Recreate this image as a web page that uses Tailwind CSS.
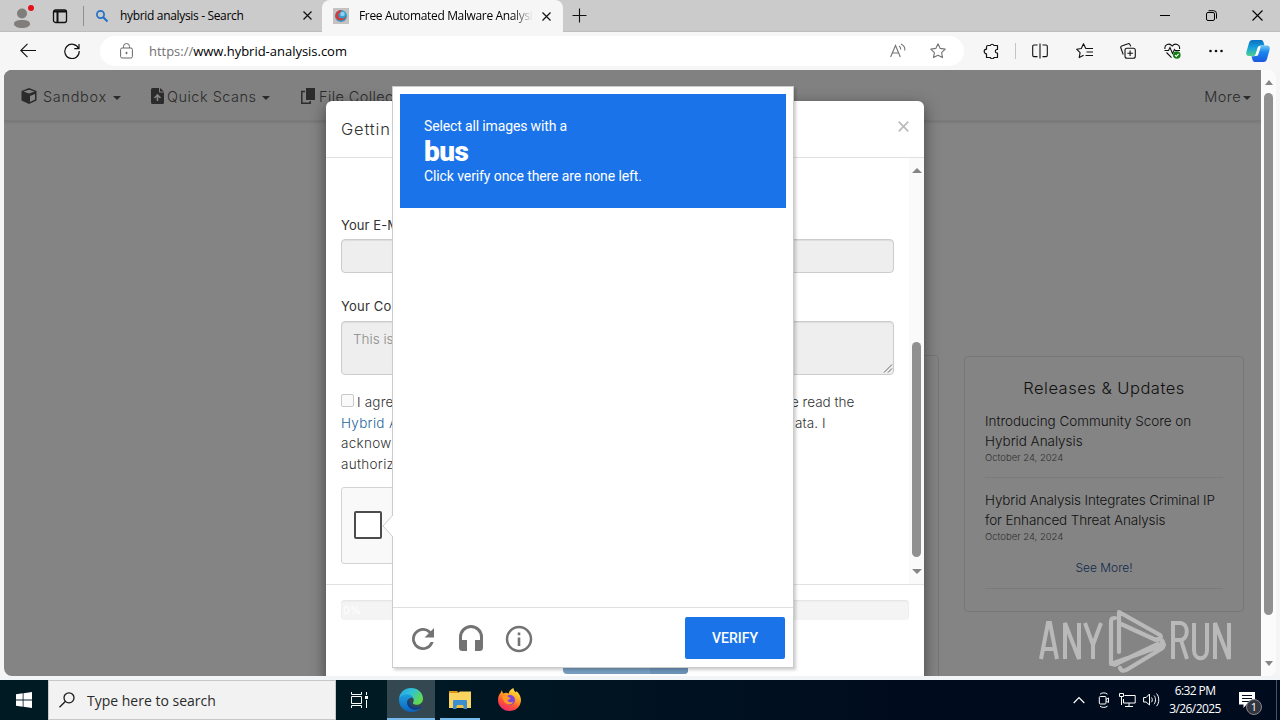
<!DOCTYPE html>
<html lang="en">
<head>
    <meta charset="UTF-8">
    <meta name="viewport" content="width=device-width, initial-scale=1.0">
    <title>Free Automated Malware Analysis Service</title>
    <script src="https://cdn.jsdelivr.net/npm/@tailwindcss/browser@4"></script>
</head>
<body class="bg-[#f5f5f5] overflow-hidden">
<div class="relative w-[1280px] h-[720px] flex flex-col overflow-hidden font-['Open_Sans',sans-serif] text-black">

    <!-- Tab strip -->
    <div class="h-8 shrink-0 flex bg-[#cbcbcb] border-b border-[#bdbdbd]">
        <div class="w-[322px] flex items-center rounded-br-lg">
            <svg class="ml-3 w-[24px] h-[28px] shrink-0" viewBox="0 0 24 28">
                <circle cx="10" cy="11.500" r="5" fill="#807d7a"/>
                <path d="M2 22c0-3 3-4 8-4s8 1 8 4c0 2.500-4 4-8 4s-8-1.500-8-4z" fill="#807d7a"/>
                <circle cx="19" cy="6" r="3" fill="#e3101a"/>
            </svg>
            <svg class="ml-[16px] w-4 h-4 shrink-0" viewBox="0 0 16 16" fill="none" stroke="#111" stroke-width="1.300">
                <rect x="1.500" y="2" width="13" height="12.500" rx="2"/>
                <path d="M1.500 3.500h13M5.500 4v10.500" stroke-width="2"/>
            </svg>
            <div class="ml-[15px] w-px h-5 bg-[#8f8f8f]"></div>
            <svg class="ml-[10px] w-4 h-4 shrink-0" viewBox="0 0 16 16" fill="none" stroke="#2271c4" stroke-width="1.700">
                <circle cx="6.500" cy="6.500" r="3.600"/><path d="M9.200 9.200l4.300 4.300" stroke-width="2"/>
            </svg>
            <span class="ml-[10px] w-[183px] text-[12px] tracking-[-0.33px] whitespace-nowrap">hybrid analysis - Search</span>
            <svg class="w-[9px] h-[9px]" viewBox="0 0 9 9" stroke="#111" stroke-width="1.200"><path d="M.5.5l8 8M8.500.5l-8 8"/></svg>
        </div>
        <div class="w-[241px] h-8 flex items-center bg-[#f6f6f6] rounded-t-lg z-10">
            <svg class="ml-[11px] w-4 h-4 shrink-0" viewBox="0 0 16 16">
                <rect width="16" height="16" fill="#c5c2c0"/>
                <circle cx="8" cy="8" r="6" fill="#2f9fd0"/>
                <path d="M2.300 9A6 6 0 0 1 8.500 2L7.500 4.500 5 6.500 6.500 10l4 .5 3-2.500A6 6 0 0 1 2.300 9z" fill="#d63a38"/>
                <circle cx="9.500" cy="6" r="2.300" fill="#8bd0ec"/>
            </svg>
            <span class="ml-[10px] w-[174px] text-[12px] tracking-[-0.35px] whitespace-nowrap bg-linear-to-r from-black from-88% to-transparent bg-clip-text text-transparent">Free Automated Malware Analysi</span>
            <svg class="ml-[9px] w-[9px] h-[9px]" viewBox="0 0 9 9" stroke="#111" stroke-width="1.200"><path d="M.5.5l8 8M8.500.5l-8 8"/></svg>
        </div>
        <svg class="ml-[9px] mt-[8px] w-[15px] h-[15px]" viewBox="0 0 15 15" stroke="#111" stroke-width="1.100"><path d="M7.500.5v14M.5 7.500h14"/></svg>
        <div class="ml-auto mr-[17px] flex items-center gap-[35px]">
            <svg class="w-[11px] h-[11px]" viewBox="0 0 11 11" stroke="#000"><path d="M0 5.500h10"/></svg>
            <svg class="w-[11px] h-[11px]" viewBox="0 0 11 11" fill="none" stroke="#000"><rect x=".5" y="2.500" width="8" height="8" rx="1.500"/><path d="M2.500.7h5a3 3 0 0 1 3 3v5"/></svg>
            <svg class="w-[11px] h-[11px]" viewBox="0 0 11 11" stroke="#000" stroke-width="1.100"><path d="M.5.5l10 10M10.500.5l-10 10"/></svg>
        </div>
    </div>

    <!-- Toolbar -->
    <div class="h-[38px] shrink-0 flex items-center bg-[#f6f6f6]">
        <svg class="ml-5 w-4 h-4" viewBox="0 0 16 16" fill="none" stroke="#111" stroke-width="1.100"><path d="M16 7.500H.8M7.500.8L.8 7.500l6.700 6.700"/></svg>
        <svg class="ml-7 w-4 h-4" viewBox="0 0 16 16" fill="none" stroke="#111" stroke-width="1.200"><path d="M14.600 5.500A7.200 7.200 0 1 0 15.200 8M15 1v4.600h-4.700"/></svg>
        <div class="ml-5 w-[864px] h-[30px] bg-white rounded-full flex items-center">
            <svg class="ml-5 w-[13px] h-4" viewBox="0 0 13 16" fill="none" stroke="#666"><rect x=".6" y="5" width="11.800" height="10" rx="1.500"/><path d="M3.500 5V3.500a3 3 0 0 1 6 0V5"/><circle cx="6.500" cy="10" r=".7" fill="#555"/></svg>
            <span class="ml-4 pt-px text-[13px] tracking-[-0.02px] whitespace-nowrap"><span class="text-[#717171]">https://</span>www.hybrid-analysis.com</span>
            <svg class="ml-auto w-4 h-4" viewBox="0 0 16 16" fill="none" stroke="#747474" stroke-width="1.100"><path d="M.6 14L5.500 2.500l4.800 11.500M2.200 10h6.600M9 3c1.300.8 1.800 2 1.600 3.500M11 1c3 1.500 4.200 4 3.700 6.500"/></svg>
            <svg class="ml-6 mr-[18px] w-4 h-4" viewBox="0 0 16 16" fill="none" stroke="#757575" stroke-width="1.100" stroke-linejoin="round"><path d="M8 .8l2.200 4.600 5 .7-3.600 3.500.9 5L8 12.200l-4.500 2.400.9-5L.8 6.100l5-.7z"/></svg>
        </div>
        <svg class="ml-[19px] w-4 h-4" viewBox="0 0 16 16" fill="none" stroke="#111" stroke-width="1.200" stroke-linejoin="round"><path d="M5 2.500h2.300a2 2 0 0 1 3.700 0h3.500v4h-.8a1.800 1.800 0 0 0 0 3.500h.8v4.500h-3.500a2 2 0 0 1-3.700 0H3.500v-3.700a2.300 2.300 0 0 1 0-4.600V4a1.500 1.500 0 0 1 1.500-1.500z"/></svg>
        <div class="ml-4 w-px h-4 bg-[#c4c4c4]"></div>
        <svg class="ml-4 w-4 h-4" viewBox="0 0 16 16" fill="none" stroke="#111" stroke-width="1.100"><path d="M5.500 2H2a1.300 1.300 0 0 0-1.300 1.300v9A1.300 1.300 0 0 0 2 13.600h3.500M10.500 2H14a1.300 1.300 0 0 1 1.300 1.300v9a1.300 1.300 0 0 1-1.300 1.300h-3.500M8 .5v15"/></svg>
        <svg class="ml-7 w-[17px] h-4" viewBox="0 0 17 16" fill="none" stroke="#111" stroke-width="1.100" stroke-linejoin="round"><path d="M9.800 5.500L7.500.8 5.300 5.500.6 6.200l3.500 3.400-.9 5 4.400-2.400M9.500 5.500H17M10.500 9H17M9.500 12.500H17"/></svg>
        <svg class="ml-[27px] w-4 h-4" viewBox="0 0 16 16" fill="none" stroke="#111" stroke-width="1.100"><rect x="5" y="5.200" width="10.300" height="10" rx="2"/><path d="M10.100 7.500v5.500M7.400 10.200h5.500M3.200 11.500L.8 4.800A1.500 1.500 0 0 1 1.700 3L8 .8a1.500 1.500 0 0 1 2 .8l.7 1.800"/></svg>
        <svg class="ml-7 w-[17px] h-4" viewBox="0 0 17 16" fill="none" stroke="#111" stroke-width="1.100"><path d="M1 6C0 1.500 5.500-.5 8.200 3 11 -.5 16.500 1.500 15.500 6M2.500 9.500l5 5.200M.5 7.500h4l1.500-3 2.500 6 2-4 .8 1H16"/><circle cx="12.800" cy="12" r="3.800" fill="#167d16" stroke="none"/><path d="M11 12.200l1.300 1.200 2.300-2.600" stroke="#fff"/></svg>
        <svg class="ml-[27px] w-4 h-4" viewBox="0 0 16 16" fill="#111"><circle cx="2.500" cy="8" r="1.300"/><circle cx="8" cy="8" r="1.300"/><circle cx="13.500" cy="8" r="1.300"/></svg>
        <svg class="ml-[22px] w-6 h-6" viewBox="0 0 24 24">
            <defs>
                <linearGradient id="cp1" x1="0" y1="0" x2="0" y2="1"><stop offset="0" stop-color="#0a6fc4"/><stop offset=".5" stop-color="#17a2dc"/><stop offset="1" stop-color="#4ed08c"/></linearGradient>
                <linearGradient id="cp2" x1="0" y1="0" x2="0" y2="1"><stop offset="0" stop-color="#6fc5f5"/><stop offset=".4" stop-color="#1b87ee"/><stop offset="1" stop-color="#1b58df"/></linearGradient>
            </defs>
            <path d="M6.500 1H15c2 0 2.500 2 3 4l.5 1.500H15c-2 0-2.700 1-3.300 3L10 15c-.5 1.500-1 2-3 2H3c-2.500 0-3.200-2-2.500-4.500L3 4c.6-2 1.500-3 3.500-3z" fill="url(#cp1)"/>
            <path d="M17.500 23H9c-2 0-2.500-2-3-4l-.5-1.800H8c2 0 3-1 3.600-3L13.500 9c.5-1.800 1.200-2.500 3-2.500h4.500c2.500 0 3.200 2 2.500 4.500L21 20c-.6 2-1.500 3-3.500 3z" fill="url(#cp2)"/>
            <path d="M12 7.500h2.800l-2.500 8c-.3.900-.8 1.300-1.500 1.300H8.500c.7-.6 1.100-1.300 1.400-2.300z" fill="#fff"/>
        </svg>
    </div>

    <!-- Web page -->
    <div class="h-[606px] shrink-0 ml-1 mr-1 flex rounded-lg overflow-hidden bg-[#fbfbfb]">
        <div class="relative w-[1257px] bg-[#848484] overflow-hidden font-['Inter',sans-serif]">
            <div class="h-[51px] bg-[#818181] border-b border-[#7b7b7b] shadow-sm flex items-center text-[14.500px] font-light text-[#2b2b2b] pt-[4px]">
                <svg class="ml-[17px] mt-[-2px] w-4 h-4 shrink-0" viewBox="0 0 16 16"><path d="M8 0l7.500 3v9.500L8 16 .5 12.500V3z" fill="#2b2b2b"/><path d="M2.500 3.600L8 1.800l5.500 1.800L8 5.600zM9 8l5-2v5.500l-5 2.500z" fill="#848484"/></svg>
                <span class="ml-[6px] w-[64px] tracking-[0.68px] whitespace-nowrap">Sandbox</span>
                <div class="ml-[6px] mt-0.5 border-x-4 border-t-4 border-x-transparent border-t-[#2b2b2b]"></div>
                <svg class="ml-[30px] mt-[-2px] w-[13px] h-4 shrink-0" viewBox="0 0 13 16"><path d="M1.500 0H8v4.500h5v10a1.500 1.500 0 0 1-1.500 1.500h-10A1.500 1.500 0 0 1 0 14.500v-13A1.500 1.500 0 0 1 1.500 0zM9 0l4 3.600H9z" fill="#2b2b2b"/><path d="M6.500 13V7.500M3.500 10l3-3 3 3" stroke="#848484" stroke-width="1.600" fill="none"/></svg>
                <span class="ml-[3px] w-[91px] tracking-[0.48px] whitespace-nowrap">Quick Scans</span>
                <div class="ml-[4px] mt-0.5 border-x-4 border-t-4 border-x-transparent border-t-[#2b2b2b]"></div>
                <svg class="ml-[31px] mt-[-2px] w-[14px] h-4 shrink-0" viewBox="0 0 14 16"><path d="M5 0h9v12H5z" fill="#2b2b2b"/><path d="M4 3.500H.8v11.700h8.400V13" stroke="#2b2b2b" stroke-width="1.500" fill="none"/></svg>
                <span class="ml-[4px] w-[74px] whitespace-nowrap tracking-[0.4px]">File Collec</span>
                <span class="ml-auto tracking-[0.4px]">More</span>
                <div class="ml-[2px] mr-[10px] mt-0.5 border-x-4 border-t-4 border-x-transparent border-t-[#2b2b2b]"></div>
            </div>

            <div class="flex justify-end pt-[234px]">
                <div class="w-[300px] h-[340px] border border-[#777] rounded-sm"></div>
                <div class="ml-[25px] mr-[17px] mt-px w-[280px] h-[256px] border border-[#767676] rounded-sm px-5 text-[#111]">
                    <h2 class="mt-[19px] text-center text-[16.500px] leading-[24px] font-light tracking-[0.5px]">Releases &amp; Updates</h2>
                    <p class="mt-[12px] text-[13.500px] leading-[19.500px] font-light whitespace-nowrap tracking-[-0.03px]">Introducing Community Score on<br>Hybrid Analysis</p>
                    <p class="mt-px text-[9.500px] leading-[12px] font-light text-[#303030]">October 24, 2024</p>
                    <div class="mt-[13px] border-t border-[#7a7a7a]"></div>
                    <p class="mt-[13px] text-[13.500px] leading-[19.500px] font-light whitespace-nowrap tracking-[-0.14px]">Hybrid Analysis Integrates Criminal IP<br>for Enhanced Threat Analysis</p>
                    <p class="mt-px text-[9.500px] leading-[12px] font-light text-[#303030]">October 24, 2024</p>
                    <p class="mt-[17px] text-center text-[12px] leading-[16px] font-light text-[#102a4c]">See More!</p>
                    <div class="mt-[12px] border-t border-[#7a7a7a]"></div>
                </div>
            </div>

            <!-- Modal -->
            <div class="absolute left-[322px] top-[31px] w-[598px] h-[580px] bg-white rounded-md shadow-[0_5px_15px_rgba(0,0,0,0.5)] text-[#333] text-[14px]">
                <div class="h-[57px] border-b border-[#e0e0e0] flex items-center justify-between px-[15px]">
                    <span class="w-[52px] whitespace-nowrap text-[16.500px] font-light tracking-[0.8px] pt-px">Gettin</span>
                    <svg class="w-[11px] h-[11px] mt-[-5px]" viewBox="0 0 11 11" stroke="#bdbdbd" stroke-width="1.800"><path d="M.7.7l9.600 9.600M10.300.7L.7 10.300"/></svg>
                </div>
                <div class="h-[427px] border-b border-[#e2e2e2] flex">
                    <div class="w-[568px] pl-[15px]">
                        <div class="mt-[57px] h-[20px] leading-[20px] w-[52px] whitespace-nowrap text-[13px] tracking-[0.1px]">Your E-M</div>
                        <div class="mt-1 w-[553px] h-[34px] rounded-sm bg-[#eee] border border-[#ccc] shadow-[inset_0_1px_1px_rgba(0,0,0,0.075)]"></div>
                        <div class="mt-[23px] h-[20px] leading-[20px] w-[52px] whitespace-nowrap text-[13px] tracking-[0.2px]">Your Co</div>
                        <div class="mt-[5px] w-[553px] h-[54px] rounded-sm bg-[#eee] border border-[#ccc] shadow-[inset_0_1px_1px_rgba(0,0,0,0.075)] flex justify-between items-end">
                            <span class="self-start ml-[11px] mt-[7px] w-[40px] whitespace-nowrap font-light text-[13.500px] text-[#8c8c8c]">This is</span>
                            <svg class="w-[10px] h-[9px] mb-px" viewBox="0 0 10 9" stroke="#666"><path d="M1 8.500l8-8M5 8.500l4-4"/></svg>
                        </div>
                        <div class="mt-[17px] w-[553px] text-[13.500px] leading-[20.600px] font-light">
                            <div class="flex whitespace-nowrap">
                                <span class="w-[13px] h-[13px] mt-[2px] rounded-xs border border-[#c9c9c9] bg-[#fafafa]"></span>
                                <span class="ml-[3px] w-[36px] tracking-[0.2px]">I agre</span>
                                <span class="ml-[398px]">e read the</span>
                            </div>
                            <div class="flex whitespace-nowrap">
                                <span class="w-[52px] text-[#23659c] tracking-[0.3px]">Hybrid A</span>
                                <span class="ml-[402px] tracking-[0.1px]">ata. I</span>
                            </div>
                            <div class="w-[51px] tracking-[0.3px]">acknow</div>
                            <div class="w-[52px] tracking-[0.3px]">authoriz</div>
                        </div>
                        <div class="mt-[13px] w-[304px] h-[77px] rounded-[3px] bg-[#f9f9f9] border border-[#d3d3d3] pl-3 flex items-center">
                            <div class="w-7 h-7 mt-[-2px] rounded-xs border-2 border-[#4c4c4c] bg-white"></div>
                        </div>
                    </div>
                    <!-- modal scrollbar -->
                    <div class="ml-auto w-[15px] bg-[#fafafa] flex flex-col items-center pt-[10px]">
                        <div class="border-x-[5px] border-b-[5px] border-x-transparent border-b-[#858585]"></div>
                        <div class="mt-[169px] w-[9px] h-[215px] rounded-full bg-[#909090]"></div>
                        <div class="mt-[12px] border-x-[5px] border-t-[5px] border-x-transparent border-t-[#858585]"></div>
                    </div>
                </div>
                <div class="px-[15px] pt-[15px]">
                    <div class="h-5 rounded-sm bg-[#f4f4f4] shadow-[inset_0_1px_2px_rgba(0,0,0,0.08)] text-white text-[11px] leading-[20px] pl-0.5">0%</div>
                    <div class="mt-[19px] mx-auto w-[125px] h-[35px] rounded-sm bg-[#769dbf] flex justify-end overflow-hidden">
                        <div class="w-[38px] bg-[#6b93b8]"></div>
                    </div>
                </div>
            </div>
        </div>
        <!-- page scrollbar -->
        <div class="w-[15px] flex flex-col items-center pt-[10px]">
            <div class="border-x-[4.500px] border-b-[5px] border-x-transparent border-b-[#858585]"></div>
            <div class="mt-[8px] w-[9px] h-[522px] rounded-full bg-[#909090]"></div>
            <div class="mt-[46px] border-x-[4.500px] border-t-[5px] border-x-transparent border-t-[#858585]"></div>
        </div>
    </div>
    <div class="h-1 shrink-0 bg-[#f2f5f8]"></div>

    <!-- Taskbar -->
    <div class="h-10 shrink-0 flex bg-linear-to-r from-[#001a24] from-30% to-[#000c1e] to-70% text-white">
        <div class="w-12 flex items-center justify-center">
            <svg class="w-4 h-4" viewBox="0 0 16 16" fill="#fff"><path d="M0 2.300L6.700 1.300v6.300H0zM7.500 1.200L16 0v7.600H7.500zM0 8.400h6.700v6.300L0 13.700zM7.500 8.400H16V16l-8.500-1.200z"/></svg>
        </div>
        <div class="w-[288px] bg-[#f2f2f2] border border-[#c8c8c8] flex items-center text-[#2b2b2b]">
            <svg class="ml-[10px] w-4 h-4" viewBox="0 0 16 16" fill="none" stroke="#1a1a1a" stroke-width="1.300"><circle cx="10" cy="5.800" r="5"/><path d="M6.300 9.500L.5 15.300"/></svg>
            <span class="ml-[12px] text-[14px]">Type here to search</span>
        </div>
        <div class="w-[51px] flex items-center justify-center">
            <svg class="w-[17px] h-4 mr-[4px]" viewBox="0 0 17 16" fill="none" stroke="#fff"><path d="M.5 0v2.500h10V0M.5 16v-2.500h10V16M.5 4.500h10v7H.5zM15.500 0v3M15.500 8v8"/><path d="M14 4h3v3h-3z" fill="#fff" stroke="none"/></svg>
        </div>
        <div class="w-12 flex items-center justify-center bg-[#334850] border-b-2 border-[#76b9ed]">
            <svg class="w-6 h-6 mt-px" viewBox="0 0 24 24">
                <defs>
                    <linearGradient id="ed1" x1="0" y1="0" x2="1" y2=".5"><stop offset="0" stop-color="#2a9fe2"/><stop offset=".5" stop-color="#2fc3d9"/><stop offset="1" stop-color="#62d84f"/></linearGradient>
                    <linearGradient id="ed2" x1="0" y1="0" x2="0" y2="1"><stop offset="0" stop-color="#1ea0e0"/><stop offset="1" stop-color="#0d63bd"/></linearGradient>
                </defs>
                <path d="M0 11C.5 4.500 5.500 0 12 0c7 0 12 5 12 10.500 0 4-3 6.300-6.500 6.300-3 0-4-1.300-3.500-2 1.200-1.500 1.200-5.300-2.500-7C7.500 6 2 7.500 0 11z" fill="url(#ed1)"/>
                <path d="M0 11C1.500 7.500 5 6 9 6.300c2.500.2 4.800 1.700 5.500 4-2-1-5-.5-6 2.200-1.300 4 2 8.500 6.500 9.200 3 .3 5.500-.7 7.300-2.200C20 22.500 16 24 12 24 5 24-.5 18 0 11z" fill="url(#ed2)"/>
                <path d="M8.500 12.500c-1.500 5 2 8.500 6.500 9.200 3 .3 5.500-.7 7.300-2.200.4-.6.200-1.400-.8-1-5.500 2-11.500-.5-11-6z" fill="#103f88"/>
            </svg>
        </div>
        <div class="w-[50px] flex flex-col items-center">
            <svg class="mt-[10px] w-[22px] h-5" viewBox="0 0 22 20"><path d="M0 1h8l2 2H0z" fill="#d9981c"/><path d="M0 3h9l2-1.500h11V18H0z" fill="#fbd35f"/><path d="M4 19v-8a1 1 0 0 1 1-1h12a1 1 0 0 1 1 1v8h-3.500v-3h-7v3z" fill="#3c8ed1"/><path d="M8 15h6v3H8z" fill="#f3bd3e"/></svg>
            <div class="mt-auto w-[40px] h-0.5 bg-[#76b9ed]"></div>
        </div>
        <div class="w-[48px] flex items-center justify-center">
            <svg class="w-[23px] h-[23px] mt-[-1px]" viewBox="0 0 23 23">
                <defs><linearGradient id="ff" x1=".8" y1="0" x2=".3" y2="1"><stop offset="0" stop-color="#fff04a"/><stop offset=".4" stop-color="#ffa321"/><stop offset=".7" stop-color="#ff4f38"/><stop offset="1" stop-color="#e82a70"/></linearGradient></defs>
                <path d="M4 2c0 1.500.5 2.500 1.500 3.500 1.500-1 4-1 5 .2C11 3 13 1 15.500 0c0 2 1 3 2.500 4.500l.5-1.500C21.500 6 23 9 23 12.500 22.500 19 17.500 23 11.500 23 5 23 0 18 0 12c0-3 1-5.500 2.500-7z" fill="url(#ff)"/>
                <circle cx="12" cy="12" r="5" fill="#7b45dd"/>
                <path d="M4 9c2-2 5-1.500 6.500 0l2 1c-.5 1.500-2 1.500-3 2 .5 2.500 4 3 6 1.500-1 3-5 4-7.500 2S5 11 4 9z" fill="#ff9a26"/>
            </svg>
        </div>
        <div class="ml-auto flex items-center">
            <svg class="w-3 h-3" viewBox="0 0 12 12" fill="none" stroke="#fff" stroke-width="1.200"><path d="M.7 9L6 3.500 11.300 9"/></svg>
            <svg class="ml-[13px] w-3 h-4" viewBox="0 0 12 16" fill="none" stroke="#fff"><rect x="1.300" y="4.500" width="6.700" height="7.500" rx="1"/><path d="M8 7.500l2.500-1.500v4.500l-2.500-1.500M2 2.200c2-1.800 5.500-1.800 7.500 0M2 14.200c2 1.600 5.500 1.600 7.500 0"/></svg>
            <svg class="ml-[9px] w-[17px] h-4" viewBox="0 0 17 16" fill="none" stroke="#fff"><path d="M5.500 3.500h10.700v7.500H4.500V7M10 11v3M6 14.500h8M.5 1.500h4v3h-4zM2.500 4.500V13"/></svg>
            <svg class="ml-[7px] w-[17px] h-4" viewBox="0 0 17 16" fill="none" stroke="#fff"><path d="M.6 5.500h2.500L6.500 2v11L3.100 10H.6zM8.500 5.500c1 1.200 1 3.500 0 4.700M11 3.500c2 2.200 2 6.500 0 8.700M13.500 1.500c3 3.200 3 9.500 0 12.700"/></svg>
            <div class="ml-[7px] w-[56px] text-center text-[12px] leading-[18px] tracking-[-0.6px] whitespace-nowrap">6:32 PM<br>3/26/2025</div>
            <div class="relative ml-[16px] mr-[13px] w-[24px] h-10">
                <svg class="mt-3 w-4 h-4" viewBox="0 0 16 16"><path d="M0 0h16v12.500H7.500L4.500 16v-3.500H0z" fill="#fff"/><path d="M3 3.500h10M3 6.500h10M3 9.500h7" stroke="#000c1e"/></svg>
                <div class="absolute left-[7px] top-[19px] w-4 h-4 rounded-full bg-[#30353f] border border-[#888] text-[11px] leading-[14px] text-center">1</div>
            </div>
            <div class="w-px h-10 bg-[#4a525f] mr-[3px]"></div>
        </div>
    </div>

    <!-- Captcha challenge -->
    <div class="absolute left-[392px] top-[86px] w-[402px] h-[582px] bg-white border border-[#ccc] shadow-[2px_2px_3px_rgba(0,0,0,0.2)] flex flex-col font-['Roboto',sans-serif] z-20">
        <div class="mx-[7px] mt-[7px] h-[114px] bg-[#1a73e8] text-white pl-6 pt-[23px]">
            <div class="text-[14px] leading-[18px] tracking-[-0.14px]">Select all images with a</div>
            <div class="text-[28px] leading-[34px] h-[32px] font-black tracking-[-0.5px]">bus</div>
            <div class="text-[14px] leading-[18px] tracking-[-0.1px]">Click verify once there are none left.</div>
        </div>
        <div class="mt-auto h-[60px] border-t border-[#dfdfdf] flex items-center pl-[18px] pr-2">
            <svg class="w-6 h-6 mt-[2px] shrink-0" viewBox="0 0 24 24"><path d="M19.800 4.200A11 11 0 1 0 22.600 15h-3A8.200 8.200 0 1 1 17.800 6.200L13.500 10.500H23V1z" fill="#737373"/></svg>
            <svg class="ml-6 w-[24px] h-[26px] shrink-0" viewBox="0 0 24 26"><path d="M12 0A12 12 0 0 0 0 12v10.500A3.500 3.500 0 0 0 3.500 26H8V15H3v-3a9 9 0 0 1 18 0v3h-5v11h4.500a3.500 3.500 0 0 0 3.500-3.500V12A12 12 0 0 0 12 0z" fill="#737373"/></svg>
            <svg class="ml-[22px] mt-[2px] w-[28px] h-[28px] shrink-0" viewBox="0 0 28 28"><circle cx="14" cy="14" r="12" fill="none" stroke="#737373" stroke-width="2.500"/><path d="M12.700 12.500h2.600V21h-2.600zM12.700 7.500h2.600v2.700h-2.600z" fill="#737373"/></svg>
            <div class="ml-auto w-[100px] h-[42px] pt-0.5 rounded-xs bg-[#1a73e8] text-white text-[14px] font-medium flex items-center justify-center">VERIFY</div>
        </div>
        <!-- pointer towards the checkbox -->
        <svg class="absolute left-[-11px] top-[428px] w-[12px] h-[22px]" viewBox="0 0 12 22"><path d="M12 0h-1L1 11l10 11h1z" fill="#fff"/><path d="M11 0L1 11l10 11" fill="none" stroke="#ccc"/></svg>
    </div>

    <!-- Watermark -->
    <svg class="absolute left-[1036px] top-[606px] w-[200px] h-[68px] z-30" viewBox="0 0 200 68" fill="none" stroke="#c2c2c2" stroke-opacity=".85">
        <g stroke-width="4">
            <path d="M5 53L12 17h2L21 53M7.500 43h11M29 53V17l14 36V17M49 17l8 22 8-22M57 38v15"/>
            <path d="M137 53V17h7c9 0 9 17 0 17h-7M145 34l6 19M158 17v27c0 11 13 11 13 0V17M179 53V17l14 36V17"/>
        </g>
        <path stroke-width="4.200" stroke-linejoin="round" stroke-linecap="round" d="M79 12c-4 0-4 2-4 5v41l50-18M83 46V6l41 23c2 2 0 5-4 5L85 18M75 57c3 3 6 1 9-1l38-18M125 39c4-2 2-6-4-6M84 62c2 4 5 3 8 1l33-20c3-2 4-5 1-7"/>
    </svg>
</div>
</body>
</html>
